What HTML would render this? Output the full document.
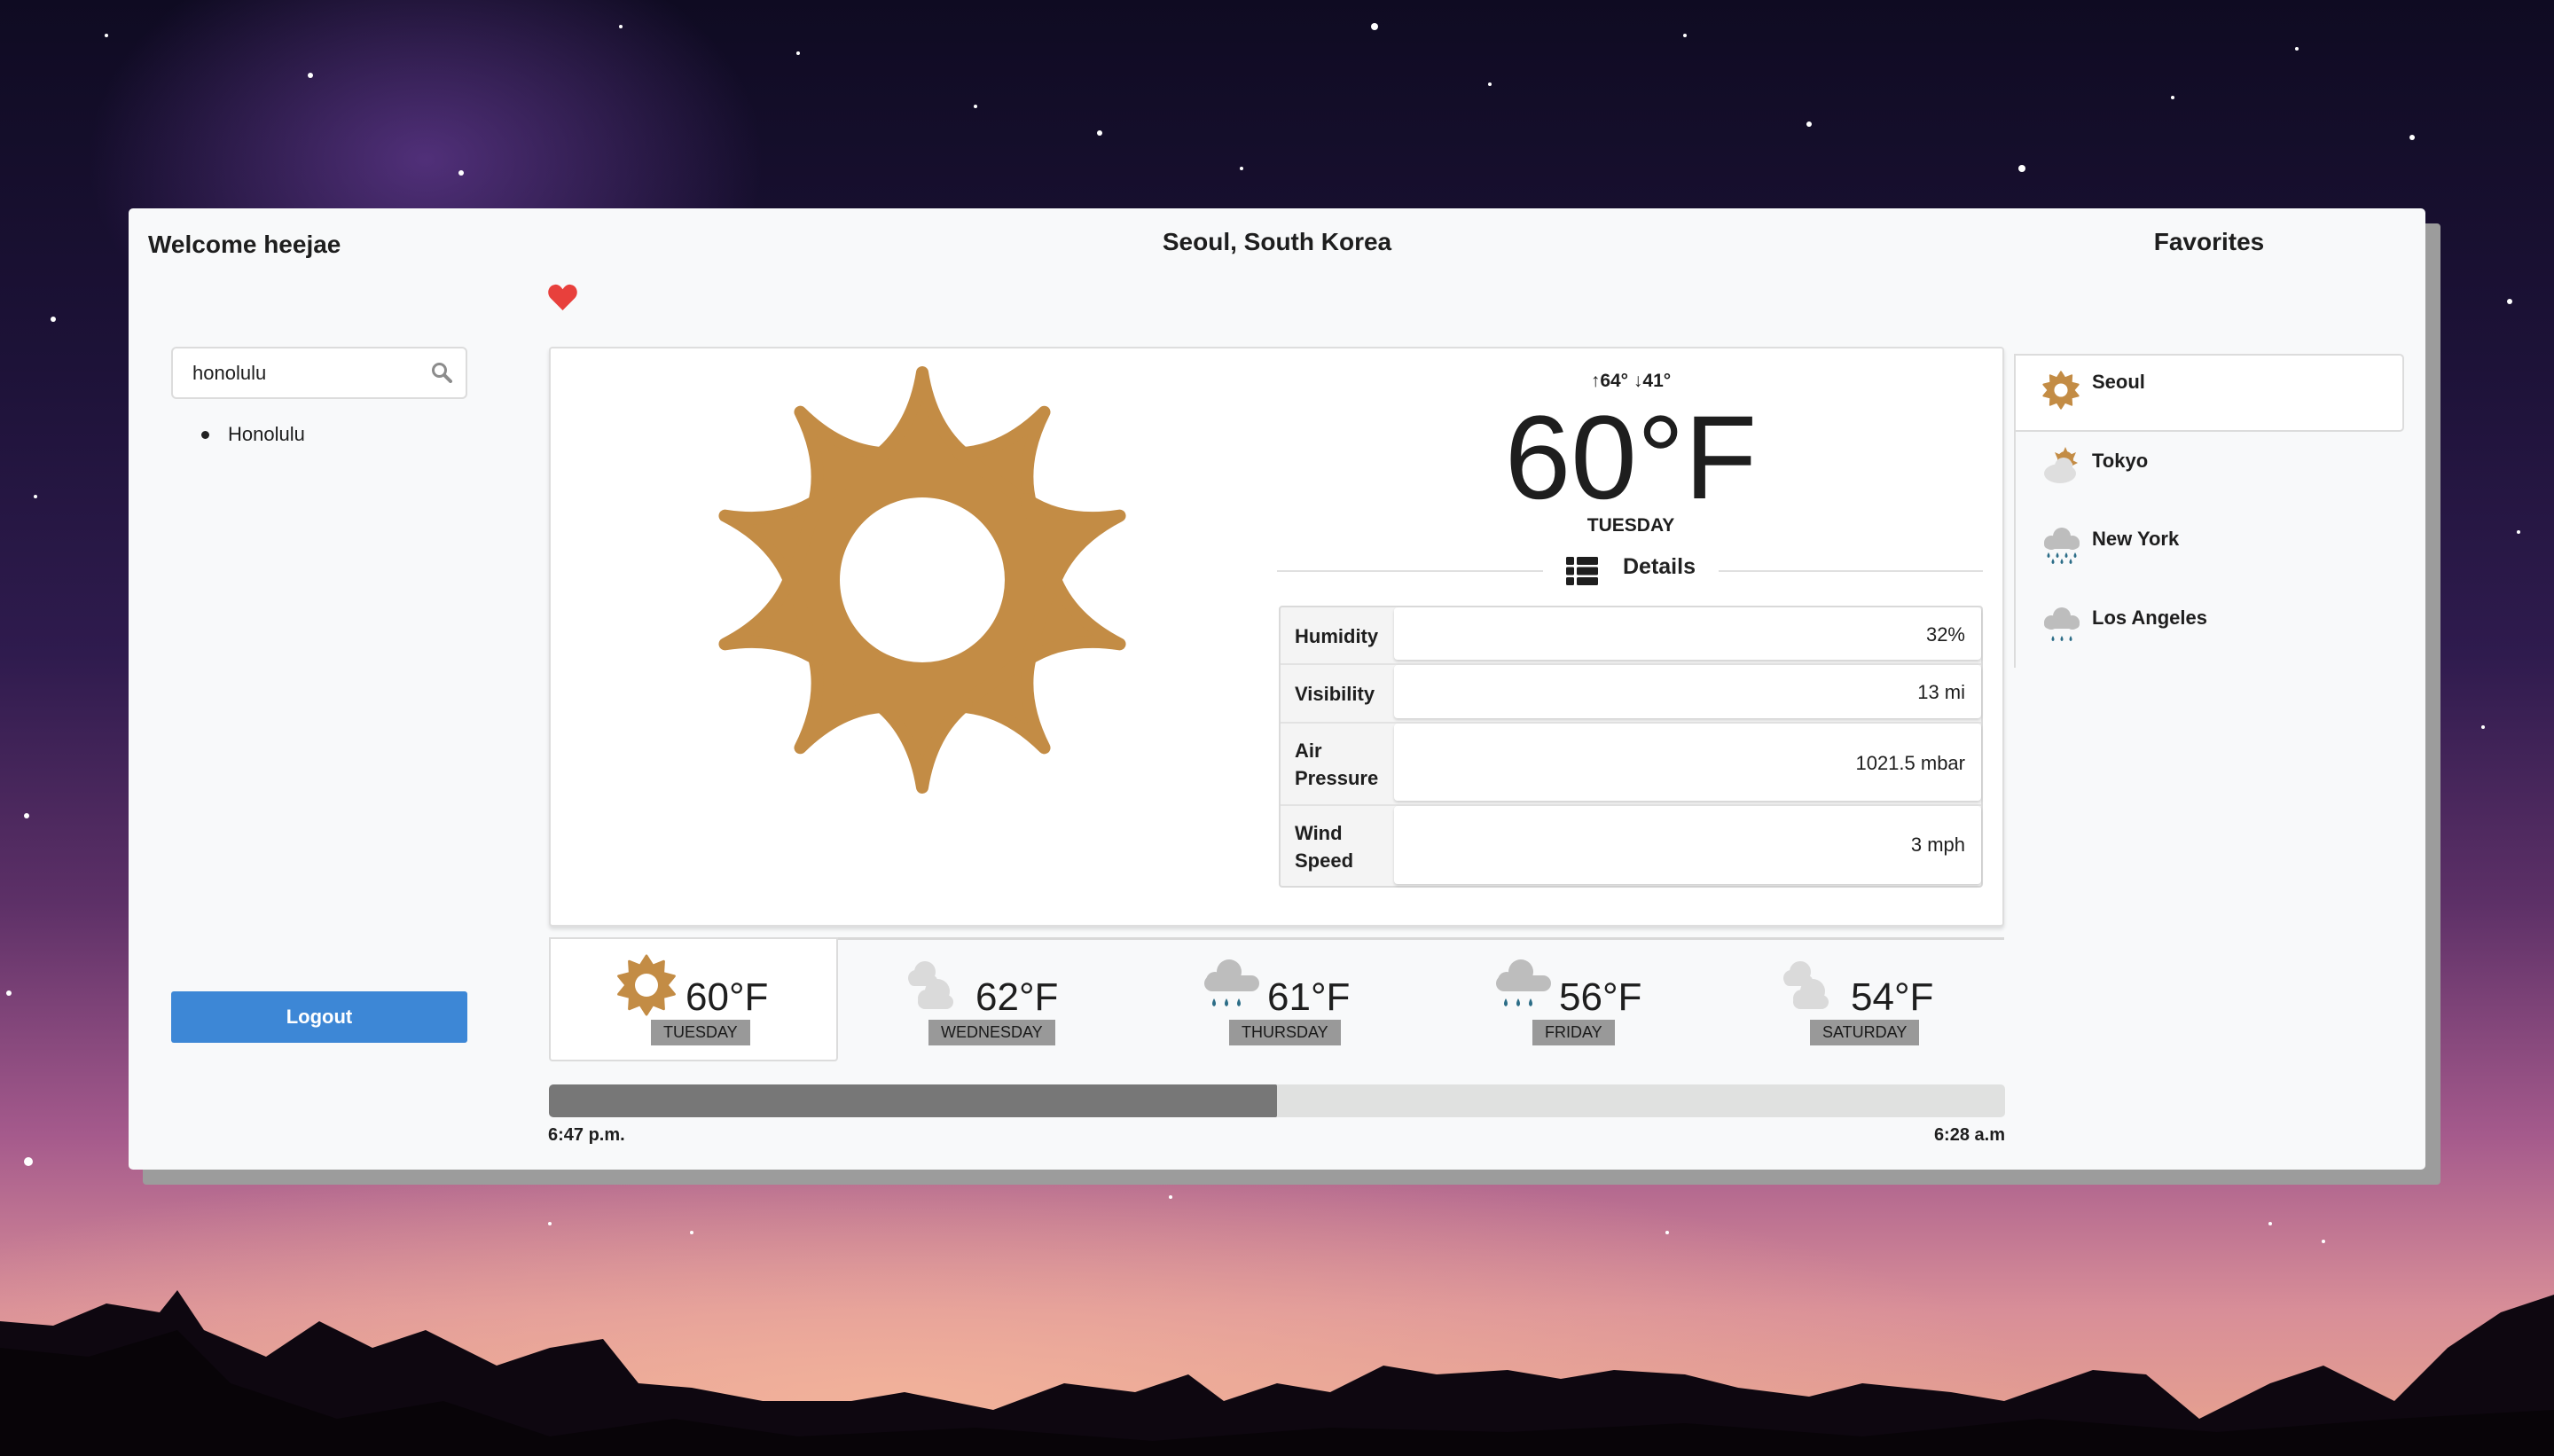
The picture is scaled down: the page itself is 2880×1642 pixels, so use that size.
<!DOCTYPE html>
<html><head><meta charset="utf-8"><style>
*{box-sizing:border-box;margin:0;padding:0}
html,body{width:2880px;height:1642px;overflow:hidden}
body{position:relative;font-family:"Liberation Sans",sans-serif;color:#1e1e1e;background:#140f28}
.abs{position:absolute}
#bg{position:absolute;left:0;top:0}
.shadow{left:161px;top:252px;width:2591px;height:1084px;background:#9c9c9c;border-radius:4px}
.card{left:145px;top:235px;width:2590px;height:1084px;background:#f8f9fa;border-radius:5px}
.h{font-weight:bold;font-size:28px;white-space:nowrap}
.search{left:193px;top:391px;width:334px;height:59px;background:#fff;border:2px solid #dcdcdc;border-radius:6px;font-size:22px;padding:15px 0 0 22px}
.logout{left:193px;top:1118px;width:334px;height:58px;background:#3d87d6;border-radius:3px;color:#fff;font-weight:bold;font-size:22px;text-align:center;line-height:58px}
.panel{left:619px;top:391px;width:1641px;height:654px;background:#fff;border:2px solid #dedede;border-radius:4px;box-shadow:0 3px 4px rgba(0,0,0,.12)}
.table{left:1442px;top:683px;width:794px;height:318px;border:2px solid #dadada;border-radius:4px;background:#f4f4f4}
.row{position:absolute;left:0;width:790px;border-bottom:2px solid #e2e2e2}
.lab{position:absolute;left:16px;font-weight:bold;font-size:22px;line-height:31px}
.val{position:absolute;left:128px;right:0;top:0;bottom:4px;background:#fff;border-radius:4px;box-shadow:0 2px 3px rgba(0,0,0,.15);font-size:22px;text-align:right;padding-right:18px}
.fc{position:absolute;top:1058px;width:328px;height:138px}
.temp{position:absolute;font-size:44px;top:42px}
.day{position:absolute;top:92px;height:29px;background:#999;color:#1a1a1a;font-size:18px;line-height:29px;padding:0 14px;text-align:center}
.fav{position:absolute;left:2359px;font-weight:bold;font-size:22px}
</style></head><body>
<svg id="bg" width="2880" height="1642">
<defs>
<linearGradient id="sky" x1="0" y1="0" x2="0" y2="1">
<stop offset="0" stop-color="#0f0b22"/>
<stop offset="0.25" stop-color="#1d1238"/>
<stop offset="0.45" stop-color="#2f1b4e"/>
<stop offset="0.62" stop-color="#5d3067"/>
<stop offset="0.78" stop-color="#a55a8c"/>
<stop offset="0.9" stop-color="#d88e98"/>
<stop offset="1" stop-color="#e9a58e"/>
</linearGradient>
<radialGradient id="glow" cx="0.35" cy="0.9" r="0.45">
<stop offset="0" stop-color="#f4b59c" stop-opacity="0.85"/>
<stop offset="1" stop-color="#f4b59c" stop-opacity="0"/>
</radialGradient>
<radialGradient id="mw" cx="0.5" cy="0.5" r="0.5">
<stop offset="0" stop-color="#6a3e9a" stop-opacity="0.7"/>
<stop offset="1" stop-color="#6a3e9a" stop-opacity="0"/>
</radialGradient>
</defs>
<rect width="2880" height="1642" fill="url(#sky)"/>
<ellipse cx="480" cy="180" rx="380" ry="260" fill="url(#mw)"/>
<rect y="1000" width="2880" height="642" fill="url(#glow)"/>
<g fill="#fff">
<circle cx="1550" cy="30" r="4"/><circle cx="2280" cy="190" r="4"/><circle cx="2720" cy="155" r="3"/><circle cx="2830" cy="340" r="3"/><circle cx="350" cy="85" r="3"/><circle cx="520" cy="195" r="3"/><circle cx="1240" cy="150" r="3"/><circle cx="1680" cy="95" r="2"/><circle cx="2040" cy="140" r="3"/><circle cx="2590" cy="55" r="2"/><circle cx="60" cy="360" r="3"/><circle cx="30" cy="920" r="3"/><circle cx="10" cy="1120" r="3"/><circle cx="32" cy="1310" r="5"/><circle cx="120" cy="40" r="2"/><circle cx="900" cy="60" r="2"/><circle cx="1100" cy="120" r="2"/><circle cx="1400" cy="190" r="2"/><circle cx="1900" cy="40" r="2"/><circle cx="2450" cy="110" r="2"/><circle cx="700" cy="30" r="2"/><circle cx="2840" cy="600" r="2"/><circle cx="2800" cy="820" r="2"/><circle cx="40" cy="560" r="2"/><circle cx="2560" cy="1380" r="2"/><circle cx="780" cy="1390" r="2"/><circle cx="1320" cy="1350" r="2"/><circle cx="620" cy="1380" r="2"/><circle cx="1880" cy="1390" r="2"/><circle cx="2620" cy="1400" r="2"/>
</g>
<path d="M0,1490 L60,1495 L120,1470 L180,1480 L200,1455 L230,1500 L300,1530 L360,1490 L420,1520 L480,1500 L560,1540 L620,1520 L680,1510 L720,1560 L780,1565 L860,1580 L960,1580 L1020,1570 L1120,1590 L1200,1560 L1280,1570 L1340,1550 L1380,1580 L1440,1560 L1500,1570 L1560,1540 L1620,1550 L1700,1545 L1760,1555 L1820,1545 L1900,1550 L1960,1565 L2040,1575 L2100,1560 L2200,1570 L2260,1580 L2360,1545 L2420,1550 L2480,1600 L2560,1560 L2620,1540 L2700,1580 L2760,1520 L2820,1480 L2880,1460 L2880,1642 L0,1642 Z" fill="#0e0710"/>
<path d="M0,1520 L100,1530 L200,1500 L260,1560 L380,1600 L500,1580 L620,1620 L760,1600 L900,1620 L1100,1610 L1300,1625 L1500,1610 L1700,1615 L1900,1605 L2100,1620 L2300,1600 L2500,1615 L2700,1600 L2880,1590 L2880,1642 L0,1642Z" fill="#080408"/>
</svg>

<div class="abs shadow"></div>
<div class="abs card"></div>

<div class="abs h" style="left:167px;top:260px">Welcome heejae</div>
<div class="abs h" style="left:1240px;width:400px;text-align:center;top:257px">Seoul, South Korea</div>
<div class="abs h" style="left:2391px;width:200px;text-align:center;top:257px">Favorites</div>

<svg class="abs" style="left:618px;top:320px" width="33" height="30" viewBox="0 0 32 29"><path d="M16,29 L3,16 C-2,11 0,2 7,1 C11,0 14,3 16,6 C18,3 21,0 25,1 C32,2 34,11 29,16 Z" fill="#e8403c"/></svg>

<div class="abs search">honolulu</div>
<svg class="abs" style="left:486px;top:408px" width="24" height="24" viewBox="0 0 24 24"><circle cx="9.5" cy="9.5" r="7" fill="none" stroke="#8c8c8c" stroke-width="3"/><path d="M15,15 L22,22" stroke="#8c8c8c" stroke-width="4" stroke-linecap="round"/></svg>
<div class="abs" style="left:227px;top:486px;width:9px;height:9px;border-radius:50%;background:#222"></div>
<div class="abs" style="left:257px;top:477px;font-size:22px">Honolulu</div>
<div class="abs logout">Logout</div>

<div class="abs panel"></div>
<svg class="abs" style="left:790px;top:404px" width="500" height="500" viewBox="-250 -250 500 500">
<g fill="#c38c45" stroke="#c38c45" stroke-width="14" stroke-linejoin="round">
<circle r="148" stroke="none"/>
<path id="ray" d="M-50,-140 Q-10,-172 0,-234 Q10,-172 50,-140 Z"/>
<use href="#ray" transform="rotate(36)"/><use href="#ray" transform="rotate(72)"/><use href="#ray" transform="rotate(108)"/><use href="#ray" transform="rotate(144)"/><use href="#ray" transform="rotate(180)"/><use href="#ray" transform="rotate(216)"/><use href="#ray" transform="rotate(252)"/><use href="#ray" transform="rotate(288)"/><use href="#ray" transform="rotate(324)"/>
</g>
<circle r="93" fill="#fff"/>
</svg>

<div class="abs" style="left:1639px;width:400px;text-align:center;top:418px;font-size:21px;font-weight:bold">↑64° ↓41°</div>
<div class="abs" style="left:1539px;width:600px;text-align:center;top:442px;font-size:134px;line-height:150px">60°F</div>
<div class="abs" style="left:1639px;width:400px;text-align:center;top:581px;font-size:21px;font-weight:bold">TUESDAY</div>
<div class="abs" style="left:1440px;top:643px;width:300px;height:2px;background:#e0e0e0"></div>
<div class="abs" style="left:1938px;top:643px;width:298px;height:2px;background:#e0e0e0"></div>
<svg class="abs" style="left:1766px;top:628px" width="36" height="32" viewBox="0 0 36 32"><g fill="#1e1e1e"><rect x="0" y="0" width="9" height="9" rx="1.5"/><rect x="12" y="0" width="24" height="9" rx="1.5"/><rect x="0" y="11.5" width="9" height="9" rx="1.5"/><rect x="12" y="11.5" width="24" height="9" rx="1.5"/><rect x="0" y="23" width="9" height="9" rx="1.5"/><rect x="12" y="23" width="24" height="9" rx="1.5"/></g></svg>
<div class="abs" style="left:1830px;top:625px;font-size:25px;font-weight:bold;color:#222">Details</div>

<div class="abs table">
<div class="row" style="top:0;height:65px"><div class="lab" style="top:17px">Humidity</div><div class="val" style="line-height:61px">32%</div></div>
<div class="row" style="top:65px;height:66px"><div class="lab" style="top:17px">Visibility</div><div class="val" style="line-height:62px">13 mi</div></div>
<div class="row" style="top:131px;height:93px"><div class="lab" style="top:15px">Air<br>Pressure</div><div class="val" style="line-height:89px">1021.5 mbar</div></div>
<div class="row" style="top:224px;height:92px;border:none"><div class="lab" style="top:15px">Wind<br>Speed</div><div class="val" style="line-height:88px">3 mph</div></div>
</div>

<div class="abs" style="left:944px;top:1057px;width:1316px;height:3px;background:#d8d8d8"></div>
<div class="abs" style="left:619px;top:1057px;width:326px;height:140px;background:#fff;border:2px solid #dcdcdc;border-radius:0 0 4px 4px"></div>

<div class="fc" style="left:619px">
<svg class="abs" style="left:75px;top:18px" width="70" height="70" viewBox="-35 -35 70 70"><g fill="#c38c45" stroke="#c38c45" stroke-width="3" stroke-linejoin="round"><circle r="23" stroke="none"/><path id="r2" d="M-7,-22 L0,-33 L7,-22Z"/><use href="#r2" transform="rotate(36)"/><use href="#r2" transform="rotate(72)"/><use href="#r2" transform="rotate(108)"/><use href="#r2" transform="rotate(144)"/><use href="#r2" transform="rotate(180)"/><use href="#r2" transform="rotate(216)"/><use href="#r2" transform="rotate(252)"/><use href="#r2" transform="rotate(288)"/><use href="#r2" transform="rotate(324)"/></g><circle r="13" fill="#fff"/></svg>
<div class="temp" style="left:154px">60°F</div>
<div class="day" style="left:115px">TUESDAY</div>
</div>

<div class="fc" style="left:945px">
<svg class="abs" style="left:78px;top:20px" width="60" height="66" viewBox="0 0 60 66"><g fill="#dadada"><circle cx="20" cy="18" r="12"/><circle cx="10" cy="25" r="9"/><rect x="2" y="22" width="32" height="12" rx="6"/><circle cx="34" cy="40" r="14"/><circle cx="22" cy="48" r="10"/><rect x="12" y="44" width="40" height="16" rx="8"/></g></svg>
<div class="temp" style="left:155px">62°F</div>
<div class="day" style="left:102px">WEDNESDAY</div>
</div>

<div class="fc" style="left:1274px">
<svg class="abs" style="left:78px;top:20px" width="70" height="70" viewBox="0 0 70 70"><g fill="#bdbdbd"><circle cx="34" cy="18" r="14"/><circle cx="18" cy="28" r="10"/><rect x="6" y="22" width="62" height="18" rx="9"/></g><g fill="#2c6d87"><path d="M17,48 q-4,7 0,9 q4,-2 0,-9z"/><path d="M31,48 q-4,7 0,9 q4,-2 0,-9z"/><path d="M45,48 q-4,7 0,9 q4,-2 0,-9z"/></g></svg>
<div class="temp" style="left:155px">61°F</div>
<div class="day" style="left:112px">THURSDAY</div>
</div>

<div class="fc" style="left:1603px">
<svg class="abs" style="left:78px;top:20px" width="70" height="70" viewBox="0 0 70 70"><g fill="#bdbdbd"><circle cx="34" cy="18" r="14"/><circle cx="18" cy="28" r="10"/><rect x="6" y="22" width="62" height="18" rx="9"/></g><g fill="#2c6d87"><path d="M17,48 q-4,7 0,9 q4,-2 0,-9z"/><path d="M31,48 q-4,7 0,9 q4,-2 0,-9z"/><path d="M45,48 q-4,7 0,9 q4,-2 0,-9z"/></g></svg>
<div class="temp" style="left:155px">56°F</div>
<div class="day" style="left:125px">FRIDAY</div>
</div>

<div class="fc" style="left:1932px">
<svg class="abs" style="left:78px;top:20px" width="60" height="66" viewBox="0 0 60 66"><g fill="#dadada"><circle cx="20" cy="18" r="12"/><circle cx="10" cy="25" r="9"/><rect x="2" y="22" width="32" height="12" rx="6"/><circle cx="34" cy="40" r="14"/><circle cx="22" cy="48" r="10"/><rect x="12" y="44" width="40" height="16" rx="8"/></g></svg>
<div class="temp" style="left:155px">54°F</div>
<div class="day" style="left:109px">SATURDAY</div>
</div>

<div class="abs" style="left:619px;top:1223px;width:1642px;height:37px;background:#e0e1e0;border-radius:5px"></div>
<div class="abs" style="left:619px;top:1223px;width:821px;height:37px;background:#777;border-radius:5px 2px 2px 5px"></div>
<div class="abs" style="left:618px;top:1269px;font-size:20px;font-weight:bold">6:47 p.m.</div>
<div class="abs" style="left:2061px;width:200px;text-align:right;top:1269px;font-size:20px;font-weight:bold">6:28 a.m</div>

<div class="abs" style="left:2271px;top:487px;width:2px;height:266px;background:#dcdcdc"></div>
<div class="abs" style="left:2271px;top:399px;width:440px;height:88px;background:#fff;border:2px solid #dcdcdc;border-radius:0 5px 5px 0"></div>
<svg class="abs" style="left:2302px;top:418px" width="44" height="44" viewBox="-35 -35 70 70"><g fill="#c38c45" stroke="#c38c45" stroke-width="3" stroke-linejoin="round"><circle r="23" stroke="none"/><use href="#r2"/><use href="#r2" transform="rotate(36)"/><use href="#r2" transform="rotate(72)"/><use href="#r2" transform="rotate(108)"/><use href="#r2" transform="rotate(144)"/><use href="#r2" transform="rotate(180)"/><use href="#r2" transform="rotate(216)"/><use href="#r2" transform="rotate(252)"/><use href="#r2" transform="rotate(288)"/><use href="#r2" transform="rotate(324)"/></g><circle r="12" fill="#fff"/></svg>
<div class="fav" style="top:418px">Seoul</div>

<svg class="abs" style="left:2303px;top:502px" width="44" height="44" viewBox="0 0 44 44"><g fill="#c38c45"><circle cx="26" cy="16" r="9"/><path d="M26,2 l3,7 h-6z M14,8 l7,3 l-4,4z M38,8 l-3,7 l-4,-4z M40,20 l-6,3 v-6z"/></g><ellipse cx="20" cy="32" rx="18" ry="11" fill="#dedede"/><circle cx="24" cy="24" r="10" fill="#dedede"/></svg>
<div class="fav" style="top:507px">Tokyo</div>

<svg class="abs" style="left:2303px;top:593px" width="44" height="50" viewBox="0 0 44 50"><g fill="#bdbdbd"><circle cx="22" cy="12" r="10"/><circle cx="10" cy="19" r="8"/><circle cx="34" cy="19" r="8"/><rect x="2" y="16" width="40" height="10" rx="5"/></g><g fill="#2c6d87"><path d="M7,30 q-3,5 0,6 q3,-1 0,-6z"/><path d="M17,30 q-3,5 0,6 q3,-1 0,-6z"/><path d="M27,30 q-3,5 0,6 q3,-1 0,-6z"/><path d="M37,30 q-3,5 0,6 q3,-1 0,-6z"/><path d="M12,37 q-3,5 0,6 q3,-1 0,-6z"/><path d="M22,37 q-3,5 0,6 q3,-1 0,-6z"/><path d="M32,37 q-3,5 0,6 q3,-1 0,-6z"/></g></svg>
<div class="fav" style="top:595px">New York</div>

<svg class="abs" style="left:2303px;top:683px" width="44" height="50" viewBox="0 0 44 50"><g fill="#bdbdbd"><circle cx="22" cy="12" r="10"/><circle cx="10" cy="19" r="8"/><circle cx="34" cy="19" r="8"/><rect x="2" y="16" width="40" height="10" rx="5"/></g><g fill="#2c6d87"><path d="M12,34 q-3,5 0,6 q3,-1 0,-6z"/><path d="M22,34 q-3,5 0,6 q3,-1 0,-6z"/><path d="M32,34 q-3,5 0,6 q3,-1 0,-6z"/></g></svg>
<div class="fav" style="top:684px">Los Angeles</div>
</body></html>
